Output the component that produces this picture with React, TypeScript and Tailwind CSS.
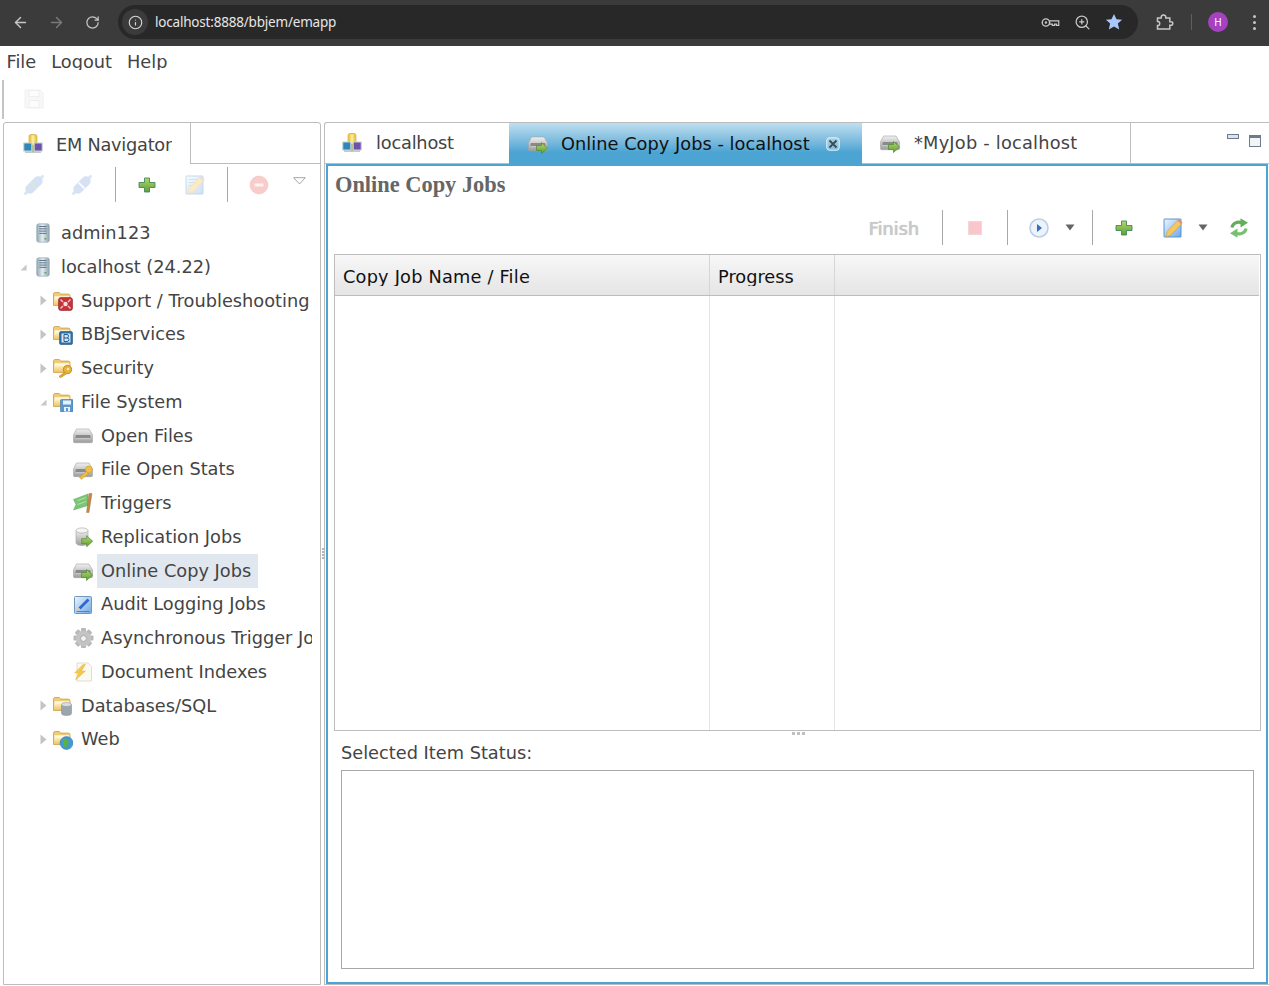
import type { ReactNode } from "react";
import { ArrowLeft, ArrowRight, RotateCw, Info, ZoomIn } from "lucide-react";

function Grads() {
  return (
    <svg width="0" height="0" className="absolute">
      <defs>
        <linearGradient id="fold" x1="0" y1="0" x2="0" y2="1">
          <stop offset="0" stopColor="#fdf0bd" />
          <stop offset="1" stopColor="#efc163" />
        </linearGradient>
        <linearGradient id="drive" x1="0" y1="0" x2="0" y2="1">
          <stop offset="0" stopColor="#f0f0f0" />
          <stop offset="1" stopColor="#9c9c9c" />
        </linearGradient>
        <linearGradient id="srv" x1="0" y1="0" x2="1" y2="0">
          <stop offset="0" stopColor="#8fa6b5" />
          <stop offset="0.45" stopColor="#e4ecf1" />
          <stop offset="1" stopColor="#8ea3b1" />
        </linearGradient>
        <linearGradient id="green" x1="0" y1="0" x2="0" y2="1">
          <stop offset="0" stopColor="#b3d76c" />
          <stop offset="1" stopColor="#5f9e35" />
        </linearGradient>
        <linearGradient id="note" x1="0" y1="0" x2="1" y2="1">
          <stop offset="0" stopColor="#eef5fc" />
          <stop offset="1" stopColor="#6ea9e6" />
        </linearGradient>
      </defs>
    </svg>
  );
}

function Svg({ children, className = "" }: { children: ReactNode; className?: string }) {
  return (
    <svg viewBox="0 0 20 20" className={`w-5 h-5 shrink-0 ${className}`}>
      {children}
    </svg>
  );
}

function NetIcon() {
  return (
    <Svg>
      <path d="M2 16.500h16v2.500H2z" fill="#c3ccc4" />
      <rect x="9" y="10" width="2" height="8" fill="#9fc27c" />
      <rect x="6" y="0.500" width="8" height="11" rx="2" fill="#eecb4f" stroke="#c9a53a" strokeWidth="0.600" />
      <rect x="8.500" y="1.500" width="3" height="9" fill="#fbeb9a" />
      <rect x="0.800" y="9" width="8" height="8" fill="#2f86b8" stroke="#c8d2d8" strokeWidth="1" />
      <rect x="11.200" y="9" width="8" height="8" fill="#7050ad" stroke="#c8d2d8" strokeWidth="1" />
    </Svg>
  );
}

function ServerIcon() {
  return (
    <Svg>
      <rect x="3.700" y="0.800" width="12.600" height="18.400" rx="2" fill="url(#srv)" stroke="#9cafbb" strokeWidth="0.700" />
      <path d="M6.300 3.500h7.400M6.300 5.800h7.400M6.300 8.100h7.400M6.300 10.400h7.400" stroke="#62798a" strokeWidth="1" />
      <rect x="11.500" y="15.200" width="1.800" height="1.200" fill="#3f9c35" />
    </Svg>
  );
}

function FolderBase({ children }: { children?: ReactNode }) {
  return (
    <Svg>
      <path d="M0.500 3.200q0-1.700 1.700-1.700h4l1.600 1.600h7.500q1.700 0 1.700 1.600V14.500H0.500z" fill="#f1cc77" stroke="#c99c45" strokeWidth="0.800" />
      <path d="M1.500 5.200h14.800V13H1.500z" fill="#fff8dd" />
      <path d="M1 7.700h15.500V14.200H1z" fill="url(#fold)" />
      {children}
    </Svg>
  );
}

function Drive() {
  return (
    <>
      <path d="M3.500 3h12.500l3.500 5.800v6.700q0 1.200-1.200 1.200H1.700q-1.200 0-1.200-1.200V8.800z" fill="url(#drive)" stroke="#a3a3a3" strokeWidth="0.600" />
      <rect x="2.500" y="9" width="15" height="4.500" rx="1" fill="#8a8a8a" />
      <rect x="2.500" y="12" width="15" height="1.500" fill="#c7c7c7" />
    </>
  );
}

function Arrow({ x = 0, y = 0 }: { x?: number; y?: number }) {
  return (
    <path
      transform={`translate(${x} ${y})`}
      d="M0 3h5V0l6 5.500L5 11V8H0z"
      fill="url(#green)"
      stroke="#4c8b34"
      strokeWidth="0.700"
    />
  );
}

function DriveArrow() {
  return (
    <Svg>
      <Drive />
      <Arrow x={8.500} y={8.500} />
    </Svg>
  );
}

function DriveKey() {
  return (
    <Svg>
      <Drive />
      <circle cx="15.800" cy="9.500" r="3.400" fill="#f1bf45" stroke="#d29a2b" strokeWidth="0.600" />
      <path d="M13.500 11.500L6.500 17.500l2 1.800L15.500 13.500z" fill="#f1bf45" stroke="#d29a2b" strokeWidth="0.600" />
    </Svg>
  );
}

function PlainDrive() {
  return (
    <Svg>
      <Drive />
    </Svg>
  );
}

function FlagIcon() {
  return (
    <Svg>
      <path d="M0.500 6.500L15 1v11.500L0.500 17l2.500-5.500z" fill="#7cc478" stroke="#5fa85a" strokeWidth="0.500" />
      <path d="M4.500 7.500l8.500-3M4.500 11.500l8.500-3" stroke="#aae2a2" strokeWidth="1.100" />
      <path d="M16 0.500L13.500 19.500h2.500L19 0.500z" fill="#c08a4b" stroke="#9c6b33" strokeWidth="0.400" />
    </Svg>
  );
}

function DbArrow() {
  return (
    <Svg>
      <path d="M3 3.500v12c0 2 2.700 3 6 3s6-1 6-3v-12z" fill="url(#drive)" stroke="#a3a3a3" strokeWidth="0.600" />
      <ellipse cx="9" cy="3.500" rx="6" ry="2.600" fill="#f5f5f5" stroke="#a3a3a3" strokeWidth="0.600" />
      <Arrow x={8.700} y={8.700} />
    </Svg>
  );
}

function AuditIcon() {
  return (
    <Svg>
      <rect x="1.500" y="1.500" width="17" height="17" rx="1" fill="url(#note)" stroke="#6f97be" strokeWidth="1" />
      <path d="M5.500 12.500L14.500 3.500l2 2L7.500 14.500z" fill="#2a6ad0" />
      <path d="M5.500 12.500L4.500 15.500 7.500 14.500z" fill="#f1c77c" />
      <path d="M3.500 16.500h13" stroke="#2d6fb0" strokeWidth="0.700" />
    </Svg>
  );
}

function GearIcon() {
  const angles = ["rotate-0", "rotate-45", "rotate-90", "rotate-[135deg]"];
  return (
    <div className="relative w-5 h-5 shrink-0">
      {angles.map((a) => (
        <div key={a} className={`absolute left-[7.5px] top-0 w-[5px] h-5 bg-[#b9b9b9] rounded-[1px] ${a}`} />
      ))}
      <div className="absolute left-[2.5px] top-[2.5px] w-[15px] h-[15px] rounded-full bg-[#c4c4c4]" />
      <div className="absolute left-[6.5px] top-[6.5px] w-[7px] h-[7px] rounded-full bg-[#f2f2f2] border border-[#a8a8a8]" />
    </div>
  );
}

function DocBolt() {
  return (
    <Svg>
      <path d="M4 1h11l3.500 3.500V19H4z" fill="#fbfaf0" stroke="#d5d5c8" strokeWidth="0.800" />
      <path d="M10 2.500L1.500 11h4L2.500 18l10-9H8.500l4-6.500z" fill="#f4c94a" stroke="#e3ad32" strokeWidth="0.400" />
    </Svg>
  );
}

function PlusIcon() {
  return (
    <Svg>
      <path d="M7.500 3h5v4.500H18v5h-5.500V17h-5v-4.500H2v-5h5.500z" fill="url(#green)" stroke="#3f8a5e" strokeWidth="0.900" />
    </Svg>
  );
}

function EditNote({ faded }: { faded?: boolean }) {
  return (
    <Svg className={faded ? "opacity-35" : ""}>
      <rect x="1" y="1" width="17" height="18" rx="0.500" fill="url(#note)" stroke="#4b8ad0" strokeWidth="0.900" />
      {faded && <path d="M3.500 4.500h12M3.500 7.500h12M3.500 10.500h12" stroke="#7cb070" strokeWidth="0.800" />}
      <path d="M4 13.500L14.500 2.500l4 3.500L7.500 17.500l-4.300 1z" fill="#f5c662" stroke="#c99a3a" strokeWidth="0.600" />
      <path d="M14.500 2.500l1.500-1.500 3.500 3.500-1 1.500z" fill="#e88e76" />
    </Svg>
  );
}

function RefreshIcon() {
  return (
    <Svg>
      <path d="M3 9.500A7 6 0 0 1 13 4.700" fill="none" stroke="#62ae5c" strokeWidth="3.200" />
      <path d="M11.500 0.300L19 4.800l-7.500 4.700z" fill="#62ae5c" />
      <path d="M17 10.500A7 6 0 0 1 7 15.300" fill="none" stroke="#78bf70" strokeWidth="3.200" />
      <path d="M8.500 10.500L1 15.200l7.500 4.500z" fill="#78bf70" />
    </Svg>
  );
}

function PlugIcon({ broken }: { broken?: boolean }) {
  return (
    <Svg>
      <path d="M1.500 18.500L18.500 1.500" stroke="#dbe6f5" strokeWidth="3" strokeLinecap="round" />
      <path d="M6 14L14 6" stroke="#d6e2f3" strokeWidth="9.500" strokeLinecap="round" />
      {broken ? (
        <path d="M6.500 7.500l6 6" stroke="#ffffff" strokeWidth="1.700" />
      ) : (
        <path d="M6.500 7.500l6 6" stroke="#dcebc9" strokeWidth="0.900" />
      )}
    </Svg>
  );
}

function MinusIcon() {
  return (
    <Svg>
      <circle cx="10" cy="10" r="9" fill="#f8cccb" stroke="#f5c4c2" strokeWidth="0.600" />
      <rect x="5.500" y="8.500" width="9" height="3" rx="0.500" fill="#fdf3f2" />
    </Svg>
  );
}

function Caret() {
  return (
    <svg viewBox="0 0 10 7" className="w-[10px] h-[7px] shrink-0">
      <path d="M0.500 0.500h9L5 6.500z" fill="#666" />
    </svg>
  );
}

function Sep({ className = "" }: { className?: string }) {
  return <div className={`w-px h-[35px] bg-[#a8a8a8] shrink-0 ${className}`} />;
}

type Row = { label: string; level: number; arrow?: "open" | "closed"; icon: ReactNode; selected?: boolean };

const rows: Row[] = [
  { label: "admin123", level: 0, icon: <ServerIcon /> },
  { label: "localhost (24.22)", level: 0, arrow: "open", icon: <ServerIcon /> },
  {
    label: "Support / Troubleshooting",
    level: 1,
    arrow: "closed",
    icon: (
      <FolderBase>
        <rect x="5.500" y="6.500" width="14" height="13" rx="2.500" fill="#c7323a" stroke="#8f2229" strokeWidth="0.600" />
        <circle cx="12.500" cy="13" r="2.200" fill="#f4dede" />
        <path d="M7.500 8.500l2.500 2.500M17.500 8.500l-2.500 2.500M7.500 17.500l2.500-2.500M17.500 17.500l-2.500-2.500" stroke="#f2c8c8" strokeWidth="1.400" />
      </FolderBase>
    ),
  },
  {
    label: "BBjServices",
    level: 1,
    arrow: "closed",
    icon: (
      <FolderBase>
        <rect x="6.500" y="6.500" width="13" height="13" rx="1.500" fill="#2d6ea6" stroke="#1e5582" strokeWidth="0.600" />
        <rect x="8.500" y="8.500" width="9" height="9" fill="#d7e6f2" />
        <path d="M11 9.500v7M11 9.500h3q1.500 0 1.500 1.700t-1.500 1.800h-3m3 0q2 0 2 1.700t-2 1.800h-3" fill="none" stroke="#1f5e92" strokeWidth="1" />
      </FolderBase>
    ),
  },
  {
    label: "Security",
    level: 1,
    arrow: "closed",
    icon: (
      <FolderBase>
        <circle cx="14.500" cy="11.500" r="4.200" fill="#e9b43c" stroke="#b07f1f" strokeWidth="0.800" />
        <circle cx="15" cy="11" r="1.300" fill="#fbe9aa" />
        <path d="M12 14L6 18.500l1.500 1.200L14 15.500" fill="#e4ac35" stroke="#b07f1f" strokeWidth="0.600" />
      </FolderBase>
    ),
  },
  {
    label: "File System",
    level: 1,
    arrow: "open",
    icon: (
      <FolderBase>
        <rect x="7.500" y="7.500" width="12.500" height="12.500" rx="1" fill="#5d97cc" stroke="#3f76a8" strokeWidth="0.600" />
        <rect x="10" y="8.500" width="8" height="4" fill="#e9f2f9" />
        <rect x="11" y="15" width="6" height="4.500" fill="#e9f2f9" />
        <rect x="13" y="16" width="2" height="3" fill="#5d97cc" />
      </FolderBase>
    ),
  },
  { label: "Open Files", level: 2, icon: <PlainDrive /> },
  { label: "File Open Stats", level: 2, icon: <DriveKey /> },
  { label: "Triggers", level: 2, icon: <FlagIcon /> },
  { label: "Replication Jobs", level: 2, icon: <DbArrow /> },
  { label: "Online Copy Jobs", level: 2, icon: <DriveArrow />, selected: true },
  { label: "Audit Logging Jobs", level: 2, icon: <AuditIcon /> },
  { label: "Asynchronous Trigger Jobs", level: 2, icon: <GearIcon /> },
  { label: "Document Indexes", level: 2, icon: <DocBolt /> },
  {
    label: "Databases/SQL",
    level: 1,
    arrow: "closed",
    icon: (
      <FolderBase>
        <path d="M8.500 8.500v9c0 1.300 2.200 2 5 2s5-.7 5-2v-9z" fill="#9aa6ab" stroke="#7e8b91" strokeWidth="0.500" />
        <ellipse cx="13.500" cy="8.500" rx="5" ry="2" fill="#d9dfe2" stroke="#7e8b91" strokeWidth="0.500" />
      </FolderBase>
    ),
  },
  {
    label: "Web",
    level: 1,
    arrow: "closed",
    icon: (
      <FolderBase>
        <circle cx="13.500" cy="13" r="6.500" fill="#3f9ad6" stroke="#2b78ad" strokeWidth="0.500" />
        <path d="M9.500 9.500q3-1.500 5 0t1 3.500q-2 1-1.500 3.500-2.500 1.500-3-1t-1.500-6z" fill="#5fb13d" />
      </FolderBase>
    ),
  },
];

function TreeRow({ row }: { row: Row }) {
  const indent = row.level === 0 ? "pl-[16px]" : row.level === 1 ? "pl-[36px]" : "pl-[56px]";
  return (
    <div className={`h-[33.75px] flex items-center whitespace-nowrap ${indent}`}>
      <div className="w-[13px] shrink-0 flex items-center justify-start">
        {row.arrow === "closed" && (
          <svg viewBox="0 0 7 11" className="w-[7px] h-[11px]">
            <path d="M0.500 0.500L6.500 5.500L0.500 10.500z" fill="#c4c4c4" />
          </svg>
        )}
        {row.arrow === "open" && (
          <svg viewBox="0 0 8 8" className="w-[7px] h-[7px]">
            <path d="M7.500 0.500V7.500H0.500z" fill="#c8c8c8" />
          </svg>
        )}
      </div>
      {row.icon}
      <span className={`ml-[4px] pl-[4px] h-full flex items-center ${row.selected ? "bg-[#e1e7ef] pr-[7px]" : ""}`}>
        {row.label}
      </span>
    </div>
  );
}

export default function App() {
  return (
    <div className="w-[1269px] h-[986px] overflow-hidden bg-white flex flex-col [font-family:'DejaVu_Sans',sans-serif] text-[17.75px] text-[#444]">
      <Grads />
      {/* browser chrome */}
      <div className="h-[46px] shrink-0 bg-[#3b3b3b] flex items-center pb-[2px] text-[#c7c7c7]">
        <ArrowLeft size={17} strokeWidth={2} className="ml-[12px]" />
        <ArrowRight size={17} strokeWidth={2} className="ml-[19px] text-[#7a7a7a]" />
        <RotateCw size={15} strokeWidth={2} className="ml-[20px]" />
        <div className="ml-[18px] w-[1020px] h-[34px] rounded-full bg-[#282828] flex items-center">
          <div className="ml-[4px] w-[26px] h-[26px] rounded-full bg-[#3b3b3b] flex items-center justify-center">
            <Info size={15} strokeWidth={1.800} className="text-[#d8d8d8]" />
          </div>
          <span className="ml-[7px] [font-family:'Noto_Sans',sans-serif] text-[13.5px] text-[#e6e6e6] tracking-[-0.2px]">
            localhost:8888/bbjem/emapp
          </span>
          <svg viewBox="0 0 20 12" className="ml-auto w-[19px] h-[11px] text-[#c7c7c7]">
            <circle cx="5" cy="6" r="4" fill="none" stroke="currentColor" strokeWidth="1.500" />
            <circle cx="5" cy="6" r="1.300" fill="currentColor" />
            <path d="M9 4.200h10v5h-2.500v-1.500h-2v1.500H12V7.700H9z" fill="none" stroke="currentColor" strokeWidth="1.300" />
          </svg>
          <ZoomIn size={17} strokeWidth={1.800} className="ml-[14px] text-[#c7c7c7]" />
          <svg viewBox="0 0 20 20" className="ml-[14px] mr-[15px] w-[18px] h-[18px]">
            <path d="M10 1l2.800 6 6.200.6-4.700 4.200 1.500 6.500L10 14.900l-5.800 3.400 1.500-6.500L1 7.600 7.200 7z" fill="#a8c7fa" />
          </svg>
        </div>
        <svg viewBox="0 0 18 18" className="ml-[18px] w-[18px] h-[18px] text-[#c7c7c7]">
          <path
            d="M1.500 5h3.700q-.3-3 2.300-3t2.300 3h4v3.700q3-.3 3 1.800t-3 1.800V16H1.500v-3.500q2.200.2 2.200-2T1.500 8.500z"
            fill="none"
            stroke="currentColor"
            strokeWidth="1.500"
          />
        </svg>
        <div className="ml-[17px] w-px h-[16px] bg-[#5f5f5f]" />
        <div className="ml-[16px] w-[20px] h-[20px] rounded-full bg-[#a642c0] flex items-center justify-center text-white text-[10px] [font-family:'Noto_Sans',sans-serif]">
          H
        </div>
        <div className="ml-[25px] flex flex-col gap-[3px]">
          <div className="w-[3px] h-[3px] rounded-full bg-[#c7c7c7]" />
          <div className="w-[3px] h-[3px] rounded-full bg-[#c7c7c7]" />
          <div className="w-[3px] h-[3px] rounded-full bg-[#c7c7c7]" />
        </div>
      </div>

      {/* menu */}
      <div className="h-[24px] shrink-0 flex items-center overflow-hidden pl-[6.5px] gap-[15px] pt-[10px] leading-none">
        <span>File</span>
        <span>Logout</span>
        <span>Help</span>
      </div>

      {/* top toolbar */}
      <div className="h-[39px] mt-[10px] shrink-0 flex items-center">
        <div className="ml-[1.5px] w-[2px] h-full bg-[#c4c4c4]" />
        <svg viewBox="0 0 20 20" className="ml-[20px] mb-[2px] w-5 h-5 opacity-60">
          <path d="M1 1h15l3 3v15H1z" fill="#f3f3f3" stroke="#e8e8e8" />
          <rect x="5" y="1.500" width="10" height="6" fill="#fbfbfb" stroke="#e6e6e6" />
          <rect x="5" y="11.500" width="10" height="7" fill="#fbfbfb" stroke="#e6e6e6" />
        </svg>
      </div>

      {/* panels */}
      <div className="flex-1 min-h-0 mt-[3px] mb-px ml-[3px] flex">
        {/* left */}
        <div className="w-[318px] shrink-0 border border-[#bdbdbd] rounded-t-[3px] flex flex-col overflow-hidden">
          <div className="h-[41px] shrink-0 flex">
            <div className="w-[187px] border-r border-[#bdbdbd] flex items-center pl-[19px] overflow-hidden">
              <NetIcon />
              <div className="ml-[13px] h-[24px] mt-[4px] overflow-hidden leading-[22px] whitespace-nowrap tracking-[-0.25px]">EM Navigator</div>
            </div>
            <div className="flex-1 border-b border-[#bdbdbd]" />
          </div>
          <div className="h-[41px] shrink-0 flex items-center">
            <div className="ml-[20px]"><PlugIcon /></div>
            <div className="ml-[28px]"><PlugIcon broken /></div>
            <Sep className="ml-[23px]" />
            <div className="ml-[21px]"><PlusIcon /></div>
            <div className="ml-[28px]"><EditNote faded /></div>
            <Sep className="ml-[22px]" />
            <div className="ml-[21px]"><MinusIcon /></div>
            <svg viewBox="0 0 13 8" className="ml-[24px] mb-[8px] w-[13px] h-[8px]">
              <path d="M0.700 0.700h11.600L6.500 7z" fill="#fff" stroke="#a5a5a5" strokeWidth="1" />
            </svg>
          </div>
          <div className="mt-[11.5px] w-[308px] overflow-hidden">
            {rows.map((r) => (
              <TreeRow key={r.label} row={r} />
            ))}
          </div>
        </div>

        {/* vertical splitter */}
        <div className="w-[3px] shrink-0 flex flex-col items-center justify-center gap-[1px]">
          <div className="w-[2px] h-[2px] bg-[#b5b5b5]" />
          <div className="w-[2px] h-[2px] bg-[#b5b5b5]" />
          <div className="w-[2px] h-[2px] bg-[#b5b5b5]" />
          <div className="w-[2px] h-[2px] bg-[#b5b5b5]" />
        </div>

        {/* right */}
        <div className="flex-1 min-w-0 border-l border-t border-b border-[#bdbdbd] rounded-tl-[3px] flex flex-col">
          <div className="h-[41px] shrink-0 flex border-b border-[#bdbdbd]">
            <div className="w-[184px] flex items-center pl-[17px]">
              <NetIcon />
              <span className="ml-[14px] whitespace-nowrap mt-[1px] tracking-[-0.2px]">localhost</span>
            </div>
            <div className="w-[353px] h-[42px] bg-gradient-to-b from-[#bfdff0] to-[#4ba4d2] to-[70%] flex items-center pl-[19px] text-[#111]">
              <DriveArrow />
              <div className="ml-[13px] h-[22px] overflow-hidden leading-[22px] whitespace-nowrap tracking-[0.04px]">Online Copy Jobs - localhost</div>
              <svg viewBox="0 0 14 14" className="ml-[16px] w-[14px] h-[14px]">
                <rect x="0.800" y="0.800" width="12.400" height="12.400" rx="2.500" fill="#ffffff" fillOpacity="0.25" stroke="#e9f2f7" />
                <path d="M3.500 3.500l7 7M10.500 3.500l-7 7" stroke="#3d4a53" strokeWidth="1.800" />
              </svg>
            </div>
            <div className="w-[269px] border-r border-[#bdbdbd] flex items-center pl-[18px]">
              <DriveArrow />
              <div className="ml-[14px] h-[22px] overflow-hidden leading-[22px] whitespace-nowrap tracking-[0.22px]">*MyJob - localhost</div>
            </div>
            <div className="flex-1 flex items-start pt-[11px] pl-[96px]">
              <div className="w-[12px] h-[5px] bg-[#dbe3ec] border border-[#6d7a90]" />
              <div className="ml-[10px] w-[12px] h-[12px] bg-[#f2f5f5] border border-[#6d7a90] border-t-[3px] mt-[1px]" />
            </div>
          </div>

          <div className="flex-1 min-h-0 ml-px mr-px border-2 border-[#4ba4d2] flex flex-col pl-[6px] pr-[5px]">
            <div className="h-[37px] shrink-0 flex items-center pl-px [font-family:'Liberation_Serif',serif] font-bold text-[22.4px] text-[#666]">
              Online Copy Jobs
            </div>
            <div className="h-[35px] mt-[7px] shrink-0 flex items-center justify-end pr-[12px]">
              <span className="mt-[4px] text-[#cbcbcb] [text-shadow:0_0_1px_#bdbdbd,0.5px_0_0_#d0d0d0]">Finish</span>
              <Sep className="ml-[23px]" />
              <div className="ml-[25px] w-[14px] h-[14px] bg-[#f8c6cb] border border-[#f2d6d8]" />
              <Sep className="ml-[25px]" />
              <svg viewBox="0 0 20 20" className="ml-[21px] w-5 h-5">
                <circle cx="10" cy="10" r="9" fill="#edf3fb" stroke="#b9cfe8" strokeWidth="1.600" />
                <path d="M8 6l5 4-5 4z" fill="#2e72bd" />
              </svg>
              <div className="ml-[16px]"><Caret /></div>
              <Sep className="ml-[17px]" />
              <div className="ml-[21px]"><PlusIcon /></div>
              <div className="ml-[29px]"><EditNote /></div>
              <div className="ml-[15px]"><Caret /></div>
              <div className="ml-[21px]"><RefreshIcon /></div>
            </div>
            <div className="h-[477px] mt-[9px] shrink-0 border border-[#bdbdbd] flex flex-col">
              <div className="h-[41px] mr-px shrink-0 flex border-b border-[#bdbdbd] bg-gradient-to-b from-[#f7f7f7] to-[#e5e5e5] text-[#111]">
                <div className="w-[375px] shrink-0 border-r border-[#d6d6d6] pl-[8px] pt-[10px]">
                  <div className="h-[21px] overflow-hidden leading-[24px] tracking-[0.2px]">Copy Job Name / File</div>
                </div>
                <div className="w-[125px] shrink-0 border-r border-[#d6d6d6] pl-[8px] pt-[10px]">
                  <div className="h-[21px] overflow-hidden leading-[24px]">Progress</div>
                </div>
                <div className="flex-1" />
              </div>
              <div className="flex-1 flex">
                <div className="w-[375px] shrink-0 border-r border-[#e4e4e4]" />
                <div className="w-[125px] shrink-0 border-r border-[#e4e4e4]" />
              </div>
            </div>
            <div className="h-[5px] shrink-0 flex justify-center items-start gap-[2px] pt-px pl-[2px]">
              <div className="w-[3px] h-[3px] bg-[#c0c0c0]" />
              <div className="w-[3px] h-[3px] bg-[#c0c0c0]" />
              <div className="w-[3px] h-[3px] bg-[#c0c0c0]" />
            </div>
            <div className="h-[34px] shrink-0 pl-[7px] flex items-center">Selected Item Status:</div>
            <div className="h-[199px] shrink-0 ml-[7px] mr-[7px] border border-[#a8a8a8]" />
          </div>
        </div>
      </div>
    </div>
  );
}
